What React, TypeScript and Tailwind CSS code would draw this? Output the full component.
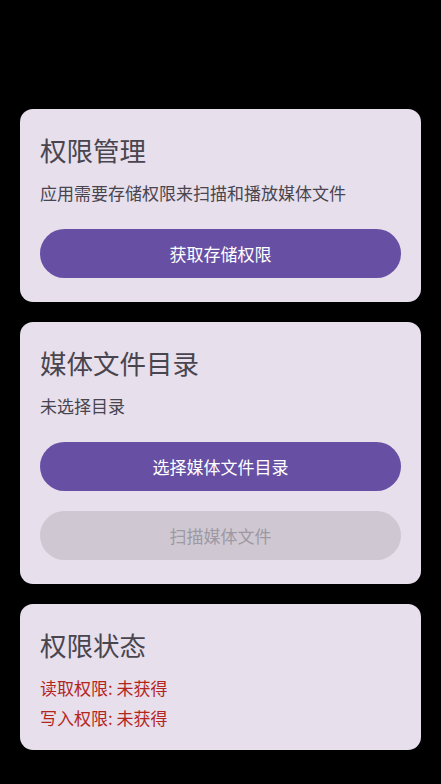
export default function App() {
  return (
    <div
      className="min-h-screen bg-black px-5 pt-[109px] pb-8"
      style={{ fontFamily: '"Noto Sans CJK SC", "Noto Sans", sans-serif' }}
    >
      <div className="flex flex-col gap-5">
        {/* 权限管理 */}
        <section className="rounded-[13px] bg-[#e7dfeb] px-5 pt-5 pb-6">
          <h2 className="text-[26.5px] leading-[42px] text-[#49454f]">权限管理</h2>
          <p className="mt-[10px] text-[17px] leading-[24px] text-[#49454f]">
            应用需要存储权限来扫描和播放媒体文件
          </p>
          <button className="mt-6 flex h-[49px] w-full items-center justify-center rounded-full bg-[#6750a4] text-[17px] text-white">
            获取存储权限
          </button>
        </section>

        {/* 媒体文件目录 */}
        <section className="rounded-[13px] bg-[#e7dfeb] px-5 pt-5 pb-6">
          <h2 className="text-[26.5px] leading-[42px] text-[#49454f]">媒体文件目录</h2>
          <p className="mt-[10px] text-[17px] leading-[24px] text-[#49454f]">未选择目录</p>
          <div className="mt-6 flex flex-col gap-5">
            <button className="flex h-[49px] w-full items-center justify-center rounded-full bg-[#6750a4] text-[17px] text-white">
              选择媒体文件目录
            </button>
            <button
              disabled
              className="flex h-[49px] w-full items-center justify-center rounded-full bg-[#cfc8d3] text-[17px] text-[#9d98a1]"
            >
              扫描媒体文件
            </button>
          </div>
        </section>

        {/* 权限状态 */}
        <section className="rounded-[13px] bg-[#e7dfeb] px-5 pt-5 pb-5">
          <h2 className="text-[26.5px] leading-[42px] text-[#49454f]">权限状态</h2>
          <div className="mt-[10px] flex flex-col gap-[6px] text-[17px] leading-[24px] text-[#b3261e]">
            <p>读取权限: 未获得</p>
            <p>写入权限: 未获得</p>
          </div>
        </section>
      </div>
    </div>
  );
}
